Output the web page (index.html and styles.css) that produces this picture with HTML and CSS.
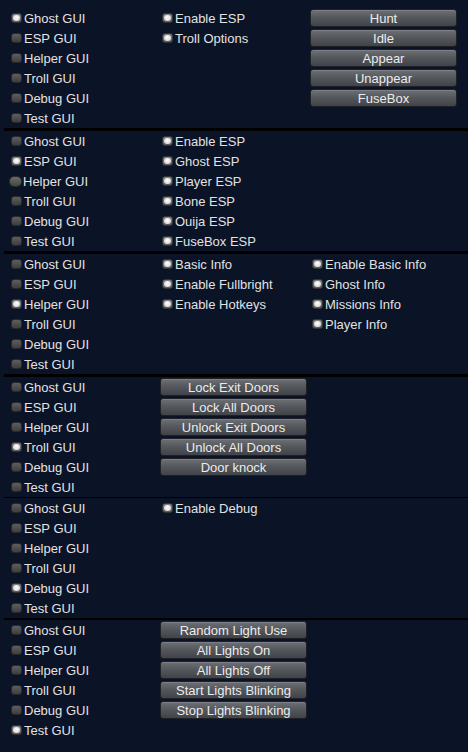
FILE: index.html
```html
<!DOCTYPE html>
<html>
<head>
<meta charset="utf-8">
<link rel="stylesheet" href="styles.css">
</head>
<body>
<div class="page">

  <section class="panel">
    <div class="col">
      <div class="row"><span class="cb on"></span>Ghost GUI</div>
      <div class="row"><span class="cb"></span>ESP GUI</div>
      <div class="row"><span class="cb"></span>Helper GUI</div>
      <div class="row"><span class="cb"></span>Troll GUI</div>
      <div class="row"><span class="cb"></span>Debug GUI</div>
      <div class="row"><span class="cb"></span>Test GUI</div>
    </div>
    <div class="col">
      <div class="row"><span class="cb on"></span>Enable ESP</div>
      <div class="row"><span class="cb on"></span>Troll Options</div>
    </div>
    <div class="col">
      <div class="row"><button class="btn">Hunt</button></div>
      <div class="row"><button class="btn">Idle</button></div>
      <div class="row"><button class="btn">Appear</button></div>
      <div class="row"><button class="btn">Unappear</button></div>
      <div class="row"><button class="btn">FuseBox</button></div>
    </div>
  </section>
  <div class="sep sep-3"></div>

  <section class="panel">
    <div class="col">
      <div class="row"><span class="cb"></span>Ghost GUI</div>
      <div class="row"><span class="cb on"></span>ESP GUI</div>
      <div class="row"><span class="cb hover"></span>Helper GUI</div>
      <div class="row"><span class="cb"></span>Troll GUI</div>
      <div class="row"><span class="cb"></span>Debug GUI</div>
      <div class="row"><span class="cb"></span>Test GUI</div>
    </div>
    <div class="col">
      <div class="row"><span class="cb on"></span>Enable ESP</div>
      <div class="row"><span class="cb on"></span>Ghost ESP</div>
      <div class="row"><span class="cb on"></span>Player ESP</div>
      <div class="row"><span class="cb on"></span>Bone ESP</div>
      <div class="row"><span class="cb on"></span>Ouija ESP</div>
      <div class="row"><span class="cb on"></span>FuseBox ESP</div>
    </div>
    <div class="col"></div>
  </section>
  <div class="sep sep-3"></div>

  <section class="panel">
    <div class="col">
      <div class="row"><span class="cb"></span>Ghost GUI</div>
      <div class="row"><span class="cb"></span>ESP GUI</div>
      <div class="row"><span class="cb on"></span>Helper GUI</div>
      <div class="row"><span class="cb"></span>Troll GUI</div>
      <div class="row"><span class="cb"></span>Debug GUI</div>
      <div class="row"><span class="cb"></span>Test GUI</div>
    </div>
    <div class="col">
      <div class="row"><span class="cb on"></span>Basic Info</div>
      <div class="row"><span class="cb on"></span>Enable Fullbright</div>
      <div class="row"><span class="cb on"></span>Enable Hotkeys</div>
    </div>
    <div class="col">
      <div class="row"><span class="cb on"></span>Enable Basic Info</div>
      <div class="row"><span class="cb on"></span>Ghost Info</div>
      <div class="row"><span class="cb on"></span>Missions Info</div>
      <div class="row"><span class="cb on"></span>Player Info</div>
    </div>
  </section>
  <div class="sep sep-3"></div>

  <section class="panel">
    <div class="col">
      <div class="row"><span class="cb"></span>Ghost GUI</div>
      <div class="row"><span class="cb"></span>ESP GUI</div>
      <div class="row"><span class="cb"></span>Helper GUI</div>
      <div class="row"><span class="cb on"></span>Troll GUI</div>
      <div class="row"><span class="cb"></span>Debug GUI</div>
      <div class="row"><span class="cb"></span>Test GUI</div>
    </div>
    <div class="col">
      <div class="row"><button class="btn">Lock Exit Doors</button></div>
      <div class="row"><button class="btn">Lock All Doors</button></div>
      <div class="row"><button class="btn">Unlock Exit Doors</button></div>
      <div class="row"><button class="btn">Unlock All Doors</button></div>
      <div class="row"><button class="btn">Door knock</button></div>
    </div>
    <div class="col"></div>
  </section>
  <div class="sep sep-1"></div>

  <section class="panel">
    <div class="col">
      <div class="row"><span class="cb"></span>Ghost GUI</div>
      <div class="row"><span class="cb"></span>ESP GUI</div>
      <div class="row"><span class="cb"></span>Helper GUI</div>
      <div class="row"><span class="cb"></span>Troll GUI</div>
      <div class="row"><span class="cb on"></span>Debug GUI</div>
      <div class="row"><span class="cb"></span>Test GUI</div>
    </div>
    <div class="col">
      <div class="row"><span class="cb on"></span>Enable Debug</div>
    </div>
    <div class="col"></div>
  </section>
  <div class="sep sep-2"></div>

  <section class="panel">
    <div class="col">
      <div class="row"><span class="cb"></span>Ghost GUI</div>
      <div class="row"><span class="cb"></span>ESP GUI</div>
      <div class="row"><span class="cb"></span>Helper GUI</div>
      <div class="row"><span class="cb"></span>Troll GUI</div>
      <div class="row"><span class="cb"></span>Debug GUI</div>
      <div class="row"><span class="cb on"></span>Test GUI</div>
    </div>
    <div class="col">
      <div class="row"><button class="btn">Random Light Use</button></div>
      <div class="row"><button class="btn">All Lights On</button></div>
      <div class="row"><button class="btn">All Lights Off</button></div>
      <div class="row"><button class="btn">Start Lights Blinking</button></div>
      <div class="row"><button class="btn">Stop Lights Blinking</button></div>
    </div>
    <div class="col"></div>
  </section>

</div>
</body>
</html>
```

FILE: styles.css
```css
html, body {
  margin: 0;
  padding: 0;
  background: #0b1326;
  height: 100%;
}

.page {
  padding-top: 8px;
  font-family: "Liberation Sans", Arial, sans-serif;
  font-size: 13px;
  color: #e2e2e2;
}

.panel {
  display: grid;
  grid-template-columns: 151px 150px 1fr;
  padding-left: 9px;
  height: 120px;
}

.col {
  display: flex;
  flex-direction: column;
}

.row {
  height: 20px;
  display: flex;
  align-items: center;
  white-space: nowrap;
}

.sep {
  margin-left: 4px;
  background: #000;
}
.sep-3 { height: 3px; }
.sep-2 { height: 2px; }
.sep-1 { height: 1px; }

.cb {
  width: 11px;
  height: 10px;
  margin-left: 2px;
  margin-right: 2px;
  border-radius: 3px;
  box-sizing: border-box;
  background: linear-gradient(#5e5e5e, #3e3e3e);
  border: 1px solid #2a2a2a;
  position: relative;
  flex: none;
}

.cb.on {
  background: linear-gradient(#808080, #5a5a5a);
  border-color: #363636;
}
.cb.on::after {
  content: "";
  position: absolute;
  left: 1px;
  top: 1px;
  width: 7px;
  height: 6px;
  border-radius: 3px;
  background: radial-gradient(circle at 50% 40%, #ffffff, #c8c8c8);
}

.cb.hover {
  width: 13px;
  height: 11px;
  margin-left: 0;
  margin-right: 1px;
  border-radius: 5px;
  background: linear-gradient(#6a6a6a, #454545);
}

.btn {
  width: 147px;
  height: 18px;
  margin: 0;
  padding: 1px 0 0 0;
  border: 1px solid #1f2126;
  border-radius: 3px;
  background: linear-gradient(#6d7075 0%, #55585d 45%, #404348 100%);
  box-shadow: inset 0 1px 0 rgba(255,255,255,0.12);
  color: #ececec;
  font-family: "Liberation Sans", Arial, sans-serif;
  font-size: 13px;
  line-height: 15px;
  text-align: center;
}
```
